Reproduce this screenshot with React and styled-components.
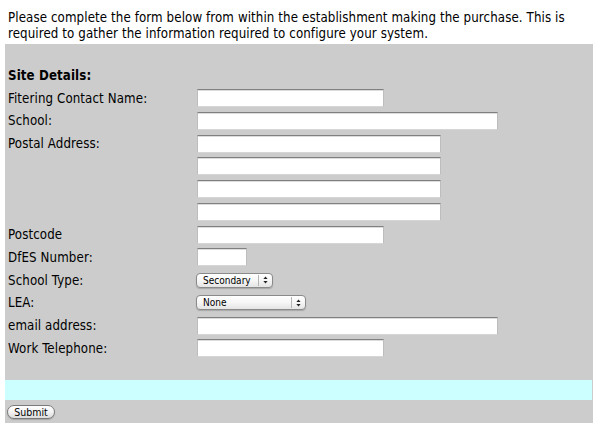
import styled, { createGlobalStyle } from 'styled-components';

const GlobalStyle = createGlobalStyle`
  body {
    margin: 0;
    background: #ffffff;
    color: #000000;
    font-family: "DejaVu Sans Condensed", "DejaVu Sans", sans-serif;
    font-stretch: condensed;
    font-size: 13.2px;
    letter-spacing: 0.1px;
  }
`;

const Page = styled.div`
  width: 588px;
  padding-left: 5px;
`;

const Intro = styled.p`
  margin: 0 0 2px;
  padding: 10px 3px 0;
  line-height: 16px;
  white-space: nowrap;
`;

const FormBox = styled.form`
  background: #cccccc;
  padding: 20px 0 2px;
`;

const Fields = styled.div`
  display: grid;
  grid-template-columns: 189px 1fr;
  grid-auto-rows: 22.75px;
  align-items: center;
  padding-left: 3px;
`;

const Label = styled.label`
  font-weight: ${p => (p.$bold ? 'bold' : 'normal')};
  grid-column: ${p => (p.$wide ? '1 / 3' : 'auto')};
  white-space: nowrap;
`;

const TextInput = styled.input`
  display: block;
  box-sizing: border-box;
  width: ${p => p.$w}px;
  height: 18px;
  margin: 0;
  padding: 0 3px;
  background: #ffffff;
  border: 1px solid #bdbdbd;
  border-top: 1px solid #808080;
  border-bottom-color: #d6d6d6;
  box-shadow: inset 0 1px 0 #dcdcdc;
  outline: none;
  font: inherit;
`;

const SelectWrap = styled.div`
  position: relative;
  width: ${p => p.$w}px;
  height: 15px;
  margin-left: -1px;
`;

const Select = styled.select`
  appearance: none;
  display: block;
  box-sizing: border-box;
  width: 100%;
  height: 100%;
  margin: 0;
  padding: 0 0 0 6px;
  border: 1px solid #8a8a8a;
  border-radius: 4px;
  background: linear-gradient(#ffffff, #f6f6f6 50%, #e4e4e4);
  box-shadow: 0 1px 1px rgba(0, 0, 0, 0.18);
  color: #000000;
  font-family: "DejaVu Sans Condensed", "DejaVu Sans", sans-serif;
  font-stretch: condensed;
  font-size: 10px;
  line-height: 13px;
  outline: none;
`;

const Arrows = styled.span`
  position: absolute;
  top: 2px;
  right: 1px;
  bottom: 2px;
  width: 13px;
  border-left: 1px solid #b4b4b4;
  display: flex;
  align-items: center;
  justify-content: center;
  pointer-events: none;
`;

const Notice = styled.div`
  height: 20px;
  margin: 20px 1px 5px 0;
  background: #ccffff;
`;

const Footer = styled.div`
  padding-left: 2px;
  height: 16px;
`;

const SubmitButton = styled.button`
  display: block;
  box-sizing: border-box;
  width: 48px;
  height: 14px;
  padding: 0;
  border: 1px solid #7a7a7a;
  border-radius: 7px;
  background: linear-gradient(#ffffff, #f2f2f2 50%, #dcdcdc);
  box-shadow: 0 1px 1px rgba(0, 0, 0, 0.2);
  color: #000000;
  font-family: "DejaVu Sans Condensed", "DejaVu Sans", sans-serif;
  font-stretch: condensed;
  font-size: 10.5px;
  line-height: 12px;
`;

function ArrowIcon() {
  return (
    <svg width="5" height="8" viewBox="0 0 5 8">
      <path d="M2.5 0.5 L4.6 3 L0.4 3 Z" fill="#222" />
      <path d="M2.5 7.5 L4.6 5 L0.4 5 Z" fill="#222" />
    </svg>
  );
}

function Dropdown({ w, options }) {
  return (
    <SelectWrap $w={w}>
      <Select defaultValue={options[0]}>
        {options.map(o => (
          <option key={o}>{o}</option>
        ))}
      </Select>
      <Arrows>
        <ArrowIcon />
      </Arrows>
    </SelectWrap>
  );
}

const campos = [
  { label: 'Fitering Contact Name:', w: 187 },
  { label: 'School:', w: 301 },
  { label: 'Postal Address:', w: 244 },
  { label: '', w: 244 },
  { label: '', w: 244 },
  { label: '', w: 244 },
  { label: 'Postcode', w: 187 },
  { label: 'DfES Number:', w: 50 },
];

export default function App() {
  return (
    <>
      <GlobalStyle />
      <Page>
        <Intro>
          Please complete the form below from within the establishment making the purchase. This is
          <br />
          required to gather the information required to configure your system.
        </Intro>
        <FormBox onSubmit={e => e.preventDefault()}>
          <Fields>
            <Label $bold $wide>Site Details:</Label>
            {campos.map((c, i) => (
              <>
                <Label key={'l' + i}>{c.label}</Label>
                <TextInput key={'i' + i} type="text" $w={c.w} />
              </>
            ))}
            <Label>School Type:</Label>
            <Dropdown w={77} options={['Secondary', 'Primary', 'Special']} />
            <Label>LEA:</Label>
            <Dropdown w={110} options={['None']} />
            <Label>email address:</Label>
            <TextInput type="text" $w={301} />
            <Label>Work Telephone:</Label>
            <TextInput type="text" $w={187} />
          </Fields>
          <Notice />
          <Footer>
            <SubmitButton type="submit">Submit</SubmitButton>
          </Footer>
        </FormBox>
      </Page>
    </>
  );
}
